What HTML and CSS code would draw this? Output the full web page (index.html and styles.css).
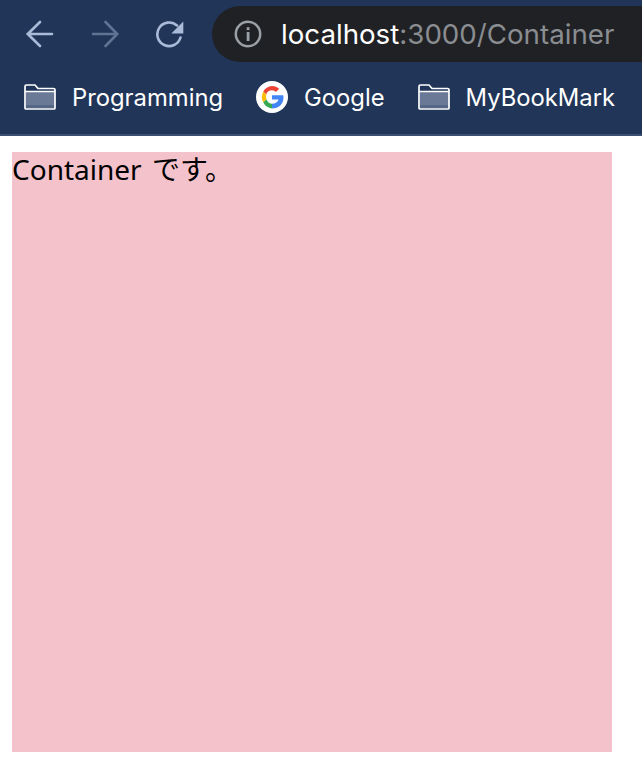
FILE: index.html
```html
<!DOCTYPE html>
<html lang="ja">
<head>
<meta charset="utf-8">
<title>Container</title>
<link rel="stylesheet" href="styles.css">
</head>
<body>
<header class="chrome">
  <div class="toolbar">
    <div class="nav-buttons">
      <svg class="nav-icon" width="28" height="28" viewBox="0 0 28 28"><path d="M1.500 14H26M14 2 1.800 14 14 26" fill="none" stroke="#a9bbd8" stroke-width="2.600" stroke-linecap="round" stroke-linejoin="round"/></svg>
      <svg class="nav-icon" width="28" height="28" viewBox="0 0 28 28"><path d="M2 14H26.500M14.500 2 26.200 14 14.500 26" fill="none" stroke="#5f7394" stroke-width="2.600" stroke-linecap="round" stroke-linejoin="round"/></svg>
      <svg class="nav-icon" width="28" height="28" viewBox="0 0 28 28"><path d="M24.500 17.500A11.800 11.800 0 1 1 21 5.500" fill="none" stroke="#a9bbd8" stroke-width="2.600" stroke-linecap="round"/><path d="M27.300 1.500V13.500H15.300Z" fill="#a9bbd8"/></svg>
    </div>
    <div class="omnibox">
      <svg class="info-icon" width="28" height="28" viewBox="0 0 28 28"><circle cx="14" cy="14" r="12.200" fill="none" stroke="#9aa0a6" stroke-width="2.500"/><rect x="12.700" y="12" width="2.800" height="9" fill="#9aa0a6"/><rect x="12.700" y="7.200" width="2.800" height="2.900" fill="#9aa0a6"/></svg>
      <div class="url"><span class="host">localhost</span><span class="path">:3000/Container</span></div>
    </div>
  </div>
  <div class="bookmarks">
    <div class="bookmark">
      <svg width="32" height="26" viewBox="0 0 32 26"><path d="M2 8H31V21H2Z" fill="#6a7a96"/><path d="M2 21H31V24.500H2Z" fill="#556785"/><path d="M1 24V2.500A1.500 1.500 0 0 1 2.500 1H11L14 4.500H29.500A1.500 1.500 0 0 1 31 6V24A1 1 0 0 1 30 25H2A1 1 0 0 1 1 24ZM1 7.500H31" fill="none" stroke="#fff" stroke-width="1.700" stroke-linejoin="round"/></svg>
      <span>Programming</span>
    </div>
    <div class="bookmark">
      <svg width="32" height="32" viewBox="0 0 32 32"><circle cx="16" cy="16" r="16" fill="#fff"/><path d="M16 14.300V18.600H22.600C21.800 21 19.400 22.800 16 22.800V27.500C22.800 27.500 27.500 23 27.500 16.500C27.500 15.600 27.400 15 27.300 14.300Z" fill="#4285f4"/><path d="M7.200 10.700A10.900 10.900 0 0 1 16 5C19 5 21.300 6.100 23.200 7.800L20 11C18.900 10 17.600 9.300 16 9.300C13.100 9.300 11.200 10.900 10.300 13.300Z" fill="#ea4335"/><path d="M7.200 10.700A11.500 11.500 0 0 0 7.200 21.300L10.600 18.500A7.200 7.200 0 0 1 10.300 13.300Z" fill="#fbbc05"/><path d="M7.200 21.300A11.200 11.200 0 0 0 16 27.500V22.800C13.300 22.800 11.500 21 10.600 18.500Z" fill="#34a853"/></svg>
      <span>Google</span>
    </div>
    <div class="bookmark">
      <svg width="32" height="26" viewBox="0 0 32 26"><path d="M2 8H31V21H2Z" fill="#6a7a96"/><path d="M2 21H31V24.500H2Z" fill="#556785"/><path d="M1 24V2.500A1.500 1.500 0 0 1 2.500 1H11L14 4.500H29.500A1.500 1.500 0 0 1 31 6V24A1 1 0 0 1 30 25H2A1 1 0 0 1 1 24ZM1 7.500H31" fill="none" stroke="#fff" stroke-width="1.700" stroke-linejoin="round"/></svg>
      <span>MyBookMark</span>
    </div>
  </div>
</header>
<main class="content">
  <div class="container-box">Container です。</div>
</main>
</body>
</html>
```
FILE: styles.css
```css
* { box-sizing: border-box; }
html, body { margin: 0; padding: 0; background: #fff; overflow: hidden; }
body { width: 642px; height: 782px; }

.chrome {
  height: 136px;
  background: #203557;
  border-bottom: 2px solid #3b4f70;
  overflow: hidden;
  font-family: Inter, "Liberation Sans", sans-serif;
}

.toolbar {
  display: flex;
  align-items: center;
  height: 56px;
  margin-top: 6px;
}

.nav-buttons {
  display: flex;
  gap: 37px;
  flex: none;
  margin-left: 26px;
  width: 186px;
}

.nav-icon { display: block; flex: none; }

.omnibox {
  flex: 1;
  height: 56px;
  display: flex;
  align-items: center;
  gap: 19px;
  padding-left: 22px;
  background: #202124;
  border-radius: 28px 0 0 28px;
}

.info-icon { display: block; flex: none; }

.url {
  font-size: 27.7px;
  white-space: nowrap;
}

.host { color: #fff; }
.path { color: #8a8d91; }

.bookmarks {
  display: flex;
  align-items: center;
  gap: 33px;
  height: 36px;
  margin-top: 17px;
  padding-left: 24px;
}

.bookmark {
  display: flex;
  align-items: center;
  gap: 16px;
  color: #fff;
  font-size: 23.800px;
  white-space: nowrap;
}

.bookmark svg { display: block; flex: none; }

.content { padding: 16px 12px; }

.container-box {
  width: 600px;
  height: 600px;
  background: #f4c2cb;
  color: #000;
  font-family: "Noto Sans", "Noto Sans CJK KR", sans-serif;
  font-size: 28px;
  line-height: 34px;
  word-spacing: 3px;
}
```
